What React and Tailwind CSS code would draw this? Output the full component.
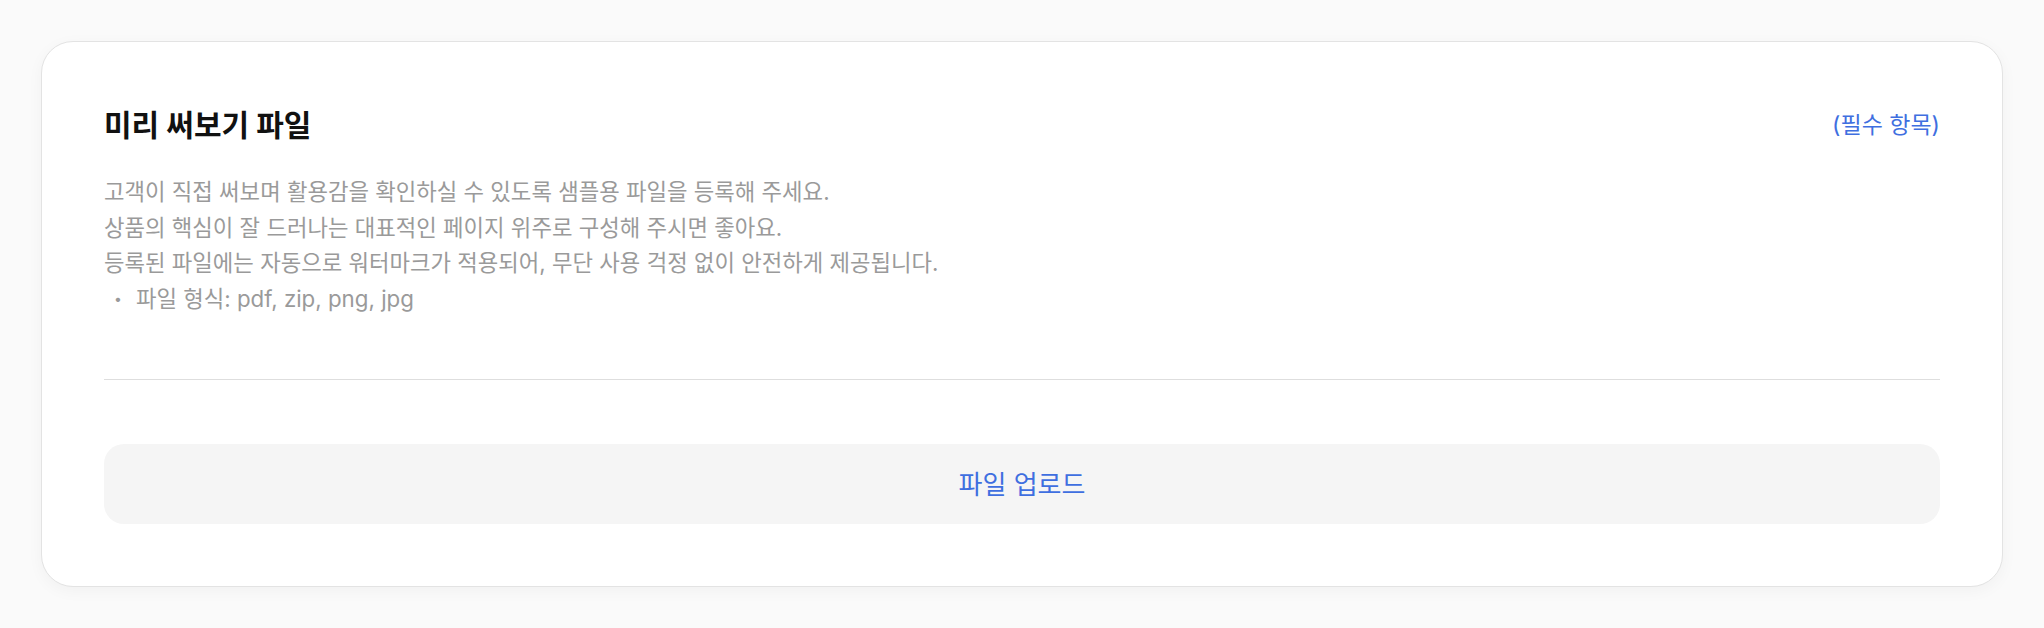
import React from 'react';

// Preview-file upload card for a product registration form.
const lines = [
  '고객이 직접 써보며 활용감을 확인하실 수 있도록 샘플용 파일을 등록해 주세요.',
  '상품의 핵심이 잘 드러나는 대표적인 페이지 위주로 구성해 주시면 좋아요.',
  '등록된 파일에는 자동으로 워터마크가 적용되어, 무단 사용 걱정 없이 안전하게 제공됩니다.',
];

export default function App() {
  return (
    <div
      className="min-h-[628px] bg-[#fafafa] px-[41px] pt-[41px] pb-[42px]"
      style={{ fontFamily: 'Inter, "Noto Sans CJK KR", "Noto Sans", sans-serif' }}
    >
      <div className="rounded-[32px] border border-[#e3e3e3] bg-white px-[62px] pt-[65px] pb-[62px] shadow-[0_4px_16px_rgba(0,0,0,0.04)]">
        <div className="flex items-center justify-between">
          <h2 className="text-[30px] font-bold leading-[36px] text-[#111]">미리 써보기 파일</h2>
          <span className="text-[23px] leading-[36px] text-[#3f6fe0]">(필수 항목)</span>
        </div>

        <div className="mt-[31px] text-[22.3px] leading-[35.5px] text-[#9a9a9a]">
          {lines.map((l) => (
            <p key={l}>{l}</p>
          ))}
          <ul>
            <li className="flex items-center pl-[10px]">
              <span className="mr-[14px] text-[14px]">•</span>
              파일 형식: pdf, zip, png, jpg
            </li>
          </ul>
        </div>

        <div className="mt-[63px] h-px bg-[#dedede]" />

        <button
          type="button"
          className="mt-[64px] flex h-[80px] w-full items-center justify-center rounded-[20px] bg-[#f5f5f5] text-[26px] text-[#3f6fe0]"
        >
          파일 업로드
        </button>
      </div>
    </div>
  );
}
